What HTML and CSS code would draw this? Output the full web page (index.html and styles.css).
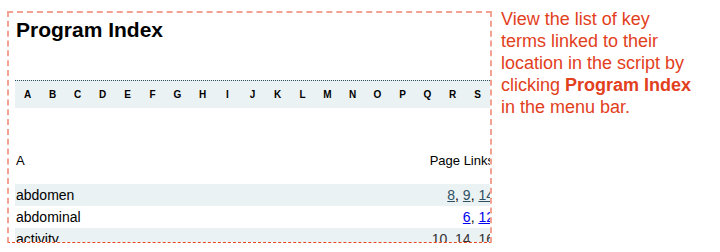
FILE: index.html
```html
<!DOCTYPE html>
<html>
<head>
<meta charset="utf-8">
<link rel="stylesheet" href="styles.css">
</head>
<body>
<div class="page">
  <div class="frame">
    <div class="content">
      <h1 class="title">Program Index</h1>
      <nav class="letters">
        <span>A</span><span>B</span><span>C</span><span>D</span><span>E</span><span>F</span><span>G</span><span>H</span><span>I</span><span>J</span><span>K</span><span>L</span><span>M</span><span>N</span><span>O</span><span>P</span><span>Q</span><span>R</span><span>S</span>
      </nav>
      <div class="head-row">
        <span>A</span>
        <span>Page Links</span>
      </div>
      <div class="row shaded">
        <span>abdomen</span>
        <span class="links"><a class="visited" href="#">8</a>, <a class="visited" href="#">9</a>, <a class="visited" href="#">14</a></span>
      </div>
      <div class="row">
        <span>abdominal</span>
        <span class="links"><a class="fresh" href="#">6</a>, <a class="fresh" href="#">12</a></span>
      </div>
      <div class="row shaded">
        <span>activity</span>
        <span class="links"><a class="plain" href="#">10</a>, <a class="plain" href="#">14</a>, <a class="plain" href="#">16</a></span>
      </div>
    </div>
  </div>
  <p class="note">View the list of key terms linked to their location in the script by clicking <b>Program Index</b> in the menu bar.</p>
</div>
</body>
</html>
```
FILE: styles.css
```css
html, body {
  margin: 0;
  padding: 0;
  background: #ffffff;
}
body {
  font-family: "Liberation Sans", Arial, sans-serif;
  color: #000;
}
.page {
  display: flex;
  align-items: flex-start;
  width: 720px;
  height: 252px;
  overflow: hidden;
}
.frame {
  margin: 11px 0 0 7px;
  width: 481px;
  height: 229px;
  border: 2px dashed #f2a292;
  border-bottom: 1px dashed #e8461f;
  overflow: hidden;
  flex: none;
}
.content {
  width: 479px;
  padding: 5px 0 0 6px;
}
.title {
  margin: 0;
  padding-left: 1px;
  font-size: 21px;
  line-height: 24px;
  font-weight: bold;
}
.letters {
  margin-top: 38px;
  border-top: 1px dotted #2c4c5c;
  background: #ebf2f3;
  height: 27px;
  display: flex;
  align-items: center;
  font-size: 10px;
  font-weight: bold;
}
.letters span {
  width: 25px;
  flex: none;
  text-align: center;
}
.head-row {
  margin-top: 45px;
  margin-bottom: 15px;
  display: flex;
  justify-content: space-between;
  font-size: 13px;
  line-height: 16px;
  padding-left: 1px;
}
.row {
  display: flex;
  justify-content: space-between;
  height: 22px;
  line-height: 22px;
  font-size: 14px;
  padding-left: 1px;
}
.row.shaded {
  background: #ebf2f3;
}
.links a {
  text-decoration: underline;
}
.links .visited {
  color: #2f5063;
}
.links .fresh {
  color: #0000ee;
}
.links .plain {
  color: #333333;
}
.note {
  margin: 8px 0 0 9px;
  width: 192px;
  font-size: 18px;
  line-height: 22px;
  color: #e2401d;
}
.note b {
  font-weight: bold;
}
```
